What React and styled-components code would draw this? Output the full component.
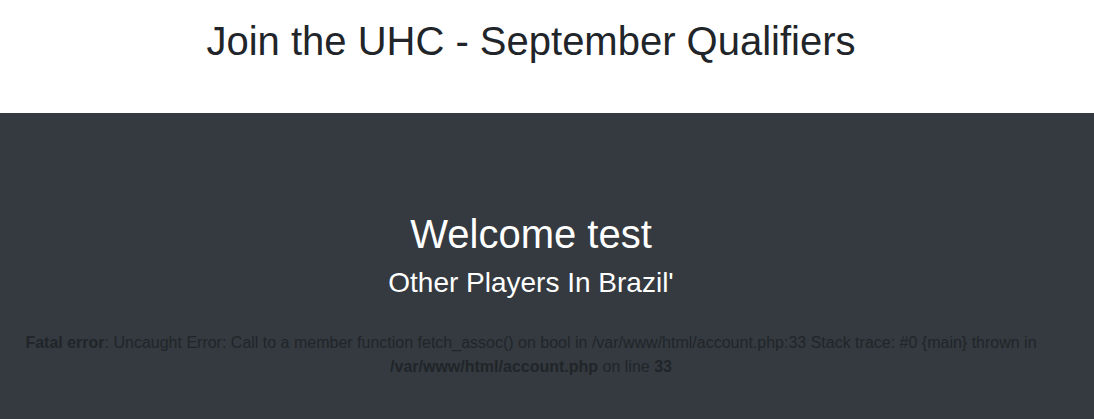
import React from 'react'
import styled, { createGlobalStyle } from 'styled-components'

const Global = createGlobalStyle`
  *, *::before, *::after { box-sizing: border-box; }
  body {
    margin: 0;
    font-family: "Liberation Sans", Arial, sans-serif;
    color: #212529;
    background: #fff;
    line-height: 1.5;
  }
`

const Header = styled.header`
  height: 113px;
  padding-right: 32px;
  text-align: center;
`

const Title = styled.h1`
  margin: 0;
  padding-top: 17px;
  font-size: 40px;
  font-weight: 400;
  line-height: 1.2;
`

const Dark = styled.section`
  background: #343a40;
  min-height: 306px;
  padding: 97px 32px 30px 0;
  text-align: center;
`

const Welcome = styled.h1`
  margin: 0;
  color: #fff;
  font-size: 40px;
  font-weight: 400;
  line-height: 1.2;
`

const Sub = styled.h3`
  margin: 8px 0 0;
  color: #fff;
  font-size: 28px;
  font-weight: 400;
  line-height: 1.2;
`

const ErrorText = styled.p`
  margin: 31px 0 0;
  padding: 0 24px;
  font-size: 16px;
  color: #212529;
`

export default function App() {
  return (
    <>
      <Global />
      <Header>
        <Title>Join the UHC - September Qualifiers</Title>
      </Header>
      <Dark>
        <Welcome>Welcome test</Welcome>
        <Sub>Other Players In Brazil'</Sub>
        <ErrorText>
          <b>Fatal error</b>: Uncaught Error: Call to a member function fetch_assoc() on bool in /var/www/html/account.php:33 Stack trace: #0 {'{main}'} thrown in <b>/var/www/html/account.php</b> on line <b>33</b>
        </ErrorText>
      </Dark>
    </>
  )
}
